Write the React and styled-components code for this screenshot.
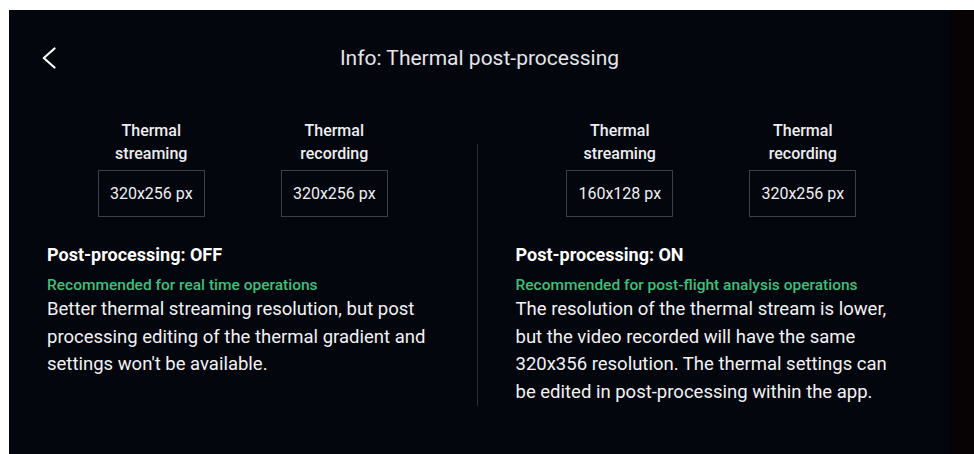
import React from "react";
import styled, { createGlobalStyle } from "styled-components";

const GlobalStyle = createGlobalStyle`
  html, body {
    margin: 0;
    background: #ffffff;
  }
  body {
    font-family: Roboto, "Liberation Sans", sans-serif;
    -webkit-font-smoothing: antialiased;
  }
`;

const columns = [
  {
    key: "off",
    sizes: [
      { label: ["Thermal", "streaming"], value: "320x256 px" },
      { label: ["Thermal", "recording"], value: "320x256 px" },
    ],
    title: "Post-processing: OFF",
    hint: "Recommended for real time operations",
    lines: [
      "Better thermal streaming resolution, but post",
      "processing editing of the thermal gradient and",
      "settings won't be available.",
    ],
  },
  {
    key: "on",
    sizes: [
      { label: ["Thermal", "streaming"], value: "160x128 px" },
      { label: ["Thermal", "recording"], value: "320x256 px" },
    ],
    title: "Post-processing: ON",
    hint: "Recommended for post-flight analysis operations",
    lines: [
      "The resolution of the thermal stream is lower,",
      "but the video recorded will have the same",
      "320x356 resolution. The thermal settings can",
      "be edited in post-processing within the app.",
    ],
  },
];

const BackIcon = () => (
  <svg width="14" height="22" viewBox="0 0 14 22" fill="none">
    <polyline
      points="12.5,1.5 1.8,11 12.5,20.5"
      stroke="#ffffff"
      strokeWidth="2.2"
      strokeLinecap="round"
      strokeLinejoin="round"
    />
  </svg>
);

const App = () => {
  return (
    <>
      <GlobalStyle />
      <Page>
        <Panel>
          <Header>
            <BackButton aria-label="Back">
              <BackIcon />
            </BackButton>
            <Title>Info: Thermal post-processing</Title>
          </Header>
          <Columns>
            {columns.map((col, i) => (
              <React.Fragment key={col.key}>
                {i > 0 && <Divider />}
                <Column>
                  <Sizes>
                    {col.sizes.map((s, j) => (
                      <SizeItem key={j}>
                        <SizeLabel>
                          {s.label[0]}
                          <br />
                          {s.label[1]}
                        </SizeLabel>
                        <SizeBox>{s.value}</SizeBox>
                      </SizeItem>
                    ))}
                  </Sizes>
                  <ModeTitle>{col.title}</ModeTitle>
                  <Hint>{col.hint}</Hint>
                  <Body>
                    {col.lines.map((l, k) => (
                      <Line key={k}>{l}</Line>
                    ))}
                  </Body>
                </Column>
              </React.Fragment>
            ))}
          </Columns>
        </Panel>
        <Edge />
      </Page>
    </>
  );
};

export default App;

const Page = styled.div`
  display: flex;
  padding: 10px 0 0 9px;
  min-height: 444px;
`;

const Panel = styled.div`
  width: 941px;
  background: #03060d;
  color: #f2f2f4;
  padding: 35px 43px 40px 38px;
  box-sizing: border-box;
`;

const Edge = styled.div`
  flex: 1;
  background: #070203;
`;

const Header = styled.div`
  display: grid;
  grid-template-columns: 1fr auto 1fr;
  align-items: center;
  margin: 0 -43px 0 -38px;
  height: 26px;
`;

const BackButton = styled.button`
  justify-self: start;
  margin-left: 33px;
  padding: 0;
  border: 0;
  background: none;
  display: flex;
  cursor: pointer;
`;

const Title = styled.h1`
  grid-column: 2;
  margin: 0;
  font-size: 21px;
  font-weight: 400;
  line-height: 26px;
  color: #e4e5ea;
`;

const Columns = styled.div`
  display: grid;
  grid-template-columns: 1fr 1px 1fr;
  column-gap: 38px;
  margin-top: 48px;
`;

const Divider = styled.div`
  background: #2a2e36;
  margin-top: 25px;
`;

const Column = styled.div`
  display: flex;
  flex-direction: column;
`;

const Sizes = styled.div`
  display: flex;
  justify-content: center;
  gap: 76px;
`;

const SizeItem = styled.div`
  display: flex;
  flex-direction: column;
  align-items: center;
  width: 107px;
`;

const SizeLabel = styled.div`
  font-size: 16px;
  font-weight: 500;
  line-height: 23px;
  text-align: center;
  color: #eeeef0;
`;

const SizeBox = styled.div`
  margin-top: 5px;
  width: 107px;
  height: 47px;
  box-sizing: border-box;
  border: 1px solid #3b3f47;
  display: flex;
  align-items: center;
  justify-content: center;
  font-size: 16px;
  color: #f0f0f2;
`;

const ModeTitle = styled.h2`
  margin: 26px 0 0;
  font-size: 18px;
  font-weight: 700;
  line-height: 24px;
  color: #ffffff;
`;

const Hint = styled.div`
  margin-top: 8px;
  font-size: 15.5px;
  font-weight: 500;
  line-height: 20px;
  color: #3fbf7a;
`;

const Body = styled.p`
  margin: 1px 0 0;
  font-size: 18.5px;
  font-weight: 400;
  line-height: 27.5px;
  color: #f2f2f4;
`;

const Line = styled.span`
  display: block;
  white-space: nowrap;
`;
